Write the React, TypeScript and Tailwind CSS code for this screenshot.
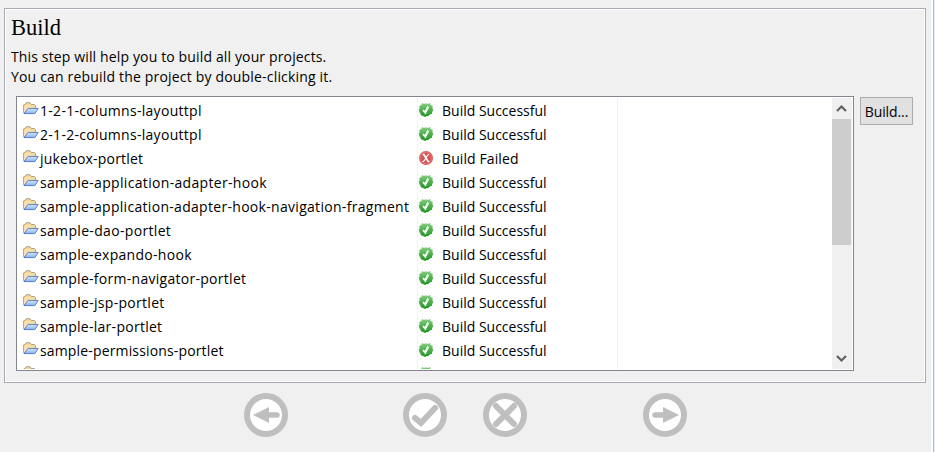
import React from 'react';

type Project = { name: string; ok: boolean; tracking: string };

const projects: Project[] = [
  { name: '1-2-1-columns-layouttpl', ok: true, tracking: 'tracking-[0.3px]' },
  { name: '2-1-2-columns-layouttpl', ok: true, tracking: 'tracking-[0.3px]' },
  { name: 'jukebox-portlet', ok: false, tracking: 'tracking-[0.2px]' },
  { name: 'sample-application-adapter-hook', ok: true, tracking: 'tracking-[0.32px]' },
  { name: 'sample-application-adapter-hook-navigation-fragment', ok: true, tracking: 'tracking-[0.3px]' },
  { name: 'sample-dao-portlet', ok: true, tracking: 'tracking-[0.33px]' },
  { name: 'sample-expando-hook', ok: true, tracking: 'tracking-[0.29px]' },
  { name: 'sample-form-navigator-portlet', ok: true, tracking: 'tracking-[0.28px]' },
  { name: 'sample-jsp-portlet', ok: true, tracking: 'tracking-[0.3px]' },
  { name: 'sample-lar-portlet', ok: true, tracking: 'tracking-[0.27px]' },
  { name: 'sample-permissions-portlet', ok: true, tracking: 'tracking-[0.15px]' },
];

function FolderIcon() {
  return (
    <svg width="16" height="16" viewBox="0 0 16 16" className="block shrink-0">
      <defs>
        <linearGradient id="folderBack" x1="0" y1="0" x2="0" y2="1">
          <stop offset="0" stopColor="#f5d48f" />
          <stop offset="1" stopColor="#fff1c8" />
        </linearGradient>
        <linearGradient id="folderFront" x1="0" y1="0" x2="0" y2="1">
          <stop offset="0" stopColor="#d5e6fd" />
          <stop offset="1" stopColor="#86b4f2" />
        </linearGradient>
      </defs>
      <path d="M.6 11.5V4L2.4 3.2 3.3 1.7H7l1.2 1.8h3.3l.9 1V7.5L3 12z" fill="url(#folderBack)" stroke="#a19b87" strokeWidth=".9" />
      <path d="M1 12.6 5 7.4h10.2l-3.4 5.2z" fill="url(#folderFront)" stroke="#5270be" strokeWidth=".9" strokeLinejoin="round" />
    </svg>
  );
}

function SuccessIcon() {
  return (
    <svg width="16" height="16" viewBox="0 0 16 16" className="block shrink-0">
      <defs>
        <linearGradient id="okFill" x1="0" y1="0" x2="0" y2="1">
          <stop offset="0" stopColor="#8bd08b" />
          <stop offset=".5" stopColor="#4bb04b" />
          <stop offset="1" stopColor="#219221" />
        </linearGradient>
      </defs>
      <path d="M4 .8 5.8 2 8 1.2l2.2.8L12 .8l.6 2.3 2.3 1-.6 2 1 2-1 1.6-.4 2-2.1.7-1.5 1.7-2 .1-1.3.8-1.9-1.1-1.9-.5-.9-2L1.4 10 .8 8l.9-1.9-.5-2 2.2-1z" fill="url(#okFill)" />
      <path d="M5.1 8.2 7.3 10.7 10.2 4.5" fill="none" stroke="#fff" strokeWidth="1.9" />
    </svg>
  );
}

function FailedIcon() {
  return (
    <svg width="16" height="16" viewBox="0 0 16 16" className="block shrink-0">
      <circle cx="8" cy="8" r="7" fill="#d95454" />
      <circle cx="8" cy="8" r="6" fill="none" stroke="#e68585" strokeWidth=".8" />
      <path d="M4.6 4.5h1.3l4.2 7h1.4" fill="none" stroke="#fff" strokeWidth="1.7" />
      <path d="M11.2 4.5h-1L5.6 11.5H4.4" fill="none" stroke="#fff" strokeWidth="1.2" />
    </svg>
  );
}

function Row({ project }: { project: Project }) {
  return (
    <li className="flex h-6 shrink-0">
      <div className="flex w-[399px] shrink-0 pl-[5px]">
        <span className="mt-[3px]"><FolderIcon /></span>
        <span className={`ml-px leading-[25px] ${project.tracking}`}>{project.name}</span>
      </div>
      <div className="flex w-[200px] shrink-0 pl-[1px]">
        <span className="mt-1">{project.ok ? <SuccessIcon /> : <FailedIcon />}</span>
        <span className={`ml-2 leading-[25px] ${project.ok ? '' : 'tracking-[0.1px]'}`}>{project.ok ? 'Build Successful' : 'Build Failed'}</span>
      </div>
    </li>
  );
}

function RoundButton({ label, children }: { label: string; children: React.ReactNode }) {
  return (
    <button aria-label={label} className="size-11">
      <svg width="44" height="44" viewBox="0 0 44 44" fill="none" stroke="#bfbfbf" strokeLinecap="round">
        <circle cx="22" cy="22" r="19" fill="#fff" strokeWidth="6" />
        {children}
      </svg>
    </button>
  );
}

export default function App() {
  return (
    <div className="flex h-[452px] w-[935px] overflow-hidden bg-[#f0f0f0] font-['Open_Sans','Noto_Sans',sans-serif] text-[14px] whitespace-nowrap text-black">
      <main className="w-[931px] shrink-0 pt-2 pl-1">
        <section className="h-[375px] w-[922px] border border-[#a9abb4]">
          <div className="h-full border border-white pl-[5px]">
            <h1 className="h-[30px] pt-[4px] font-['Liberation_Serif',serif] text-[22.5px] leading-[28px]">Build</h1>
            <p className="mt-[7px] leading-5">
              <span className="tracking-[0.14px]">This step will help you to build all your projects.</span>
              <br />
              <span className="tracking-[0.18px]">You can rebuild the project by double-clicking it.</span>
            </p>
            <div className="mt-[9px] ml-[5px] flex items-start gap-[6px]">
              <div className="flex h-[275px] w-[838px] border border-[#828790] bg-white p-px">
                <ul className="flex h-full w-[814px] shrink-0 flex-col overflow-hidden bg-[linear-gradient(to_right,transparent_399px,#edf3fb_399px,#edf3fb_400px,transparent_400px,transparent_599px,#edf3fb_599px,#edf3fb_600px,transparent_600px)]">
                  {projects.map((project) => <Row key={project.name} project={project} />)}
                  <li className="flex h-6 shrink-0 pl-[5px]">
                    <span className="mt-[3px] w-[395px]"><FolderIcon /></span>
                    <span className="mt-1"><SuccessIcon /></span>
                  </li>
                </ul>
                <div className="flex h-full w-5 shrink-0 flex-col bg-[#f0f0f0]">
                  <svg width="20" height="21" viewBox="0 0 20 21" fill="none" stroke="#606060" strokeWidth="2.2">
                    <path d="m5 13 4.5-4.5L14 13" />
                  </svg>
                  <div className="h-[126px] w-[19px] bg-[#cdcdcd]" />
                  <svg className="mt-auto" width="20" height="21" viewBox="0 0 20 21" fill="none" stroke="#606060" strokeWidth="2.2">
                    <path d="m5 8 4.5 4.5L14 8" />
                  </svg>
                </div>
              </div>
              <button className="mt-px h-7 w-[53px] border border-[#adadad] bg-[#e1e1e1] tracking-[-0.1px]">Build...</button>
            </div>
          </div>
        </section>
        <nav className="mt-[10px] ml-[239.5px] flex">
          <RoundButton label="Back">
            <path d="M25 22h8" strokeWidth="5.5" />
            <path d="M9 22 25 14v16z" fill="#bfbfbf" stroke="none" />
          </RoundButton>
          <div className="ml-[115.5px] flex gap-9">
            <RoundButton label="Finish">
              <path d="m12 25 6 5L32 15" strokeWidth="6" strokeLinejoin="miter" />
            </RoundButton>
            <RoundButton label="Cancel">
              <path d="m13 13 18 18M31 13 13 31" strokeWidth="6" />
            </RoundButton>
          </div>
          <div className="ml-[116px]">
            <RoundButton label="Next">
              <path d="M12 22h8" strokeWidth="5.5" />
              <path d="M36 22 20 14v16z" fill="#bfbfbf" stroke="none" />
            </RoundButton>
          </div>
        </nav>
      </main>
      <div className="h-full w-1 border-l-2 border-white bg-[#e6eaf6]">
        <div className="h-full w-px bg-[#b4bedc]" />
      </div>
    </div>
  );
}
